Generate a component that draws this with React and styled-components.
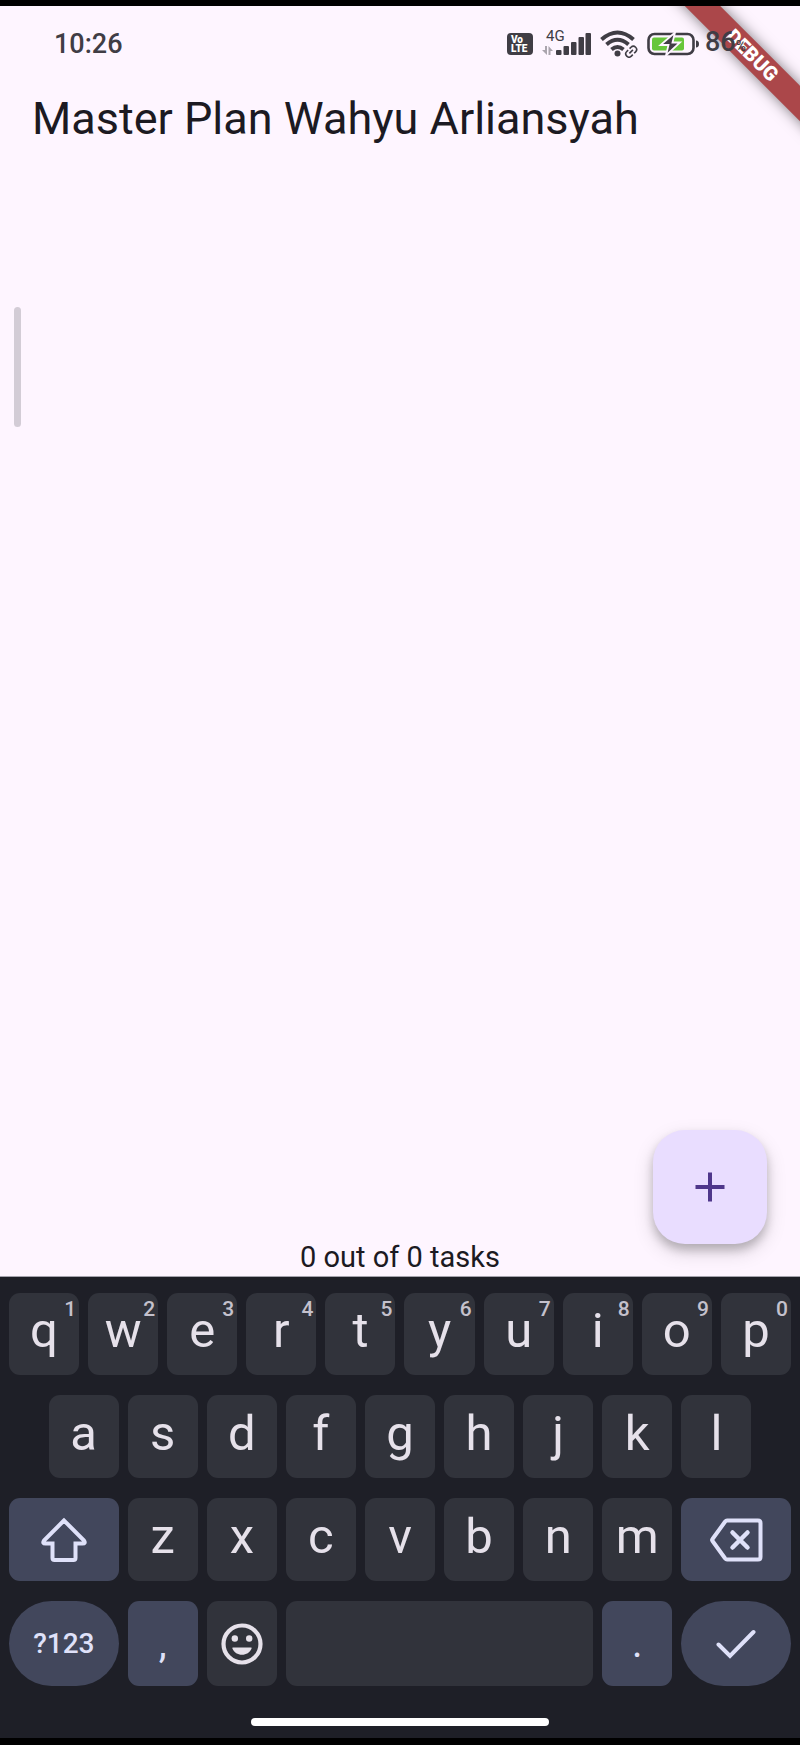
import React from "react";
import styled, { createGlobalStyle, css } from "styled-components";

const color = {
  surface: "#fef5ff",
  ink: "#1c1a22",
  status: "#403d45",
  board: "#1e1f27",
  key: "#31333b",
  action: "#42475c",
  glyph: "#e6e1ea",
  actionGlyph: "#dfe1f9",
};

const GlobalStyle = createGlobalStyle`
  *, *::before, *::after { box-sizing: border-box; }
  body {
    margin: 0;
    background: #000;
    font-family: Roboto, "Liberation Sans", sans-serif;
  }
  button { font: inherit; border: 0; padding: 0; cursor: pointer; }
  svg { display: block; }
`;

const Screen = styled.div`
  display: flex;
  flex-direction: column;
  min-height: 100vh;
  padding: 6px 0 7px;
`;

const AppArea = styled.div`
  position: relative;
  flex: 1;
  display: flex;
  flex-direction: column;
  overflow: hidden;
  background: ${color.surface};
  color: ${color.ink};
`;

const StatusBar = styled.header`
  position: relative;
  z-index: 2;
  display: flex;
  align-items: center;
  justify-content: space-between;
  height: 76px;
  padding: 0 54px;
  color: ${color.status};
  font-size: 27px;
  line-height: 32px;
  font-weight: 500;
`;

const StatusIcons = styled.div`
  display: flex;
  align-items: center;
  gap: 9px;
`;

const VolteBadge = styled.span`
  display: flex;
  flex-direction: column;
  justify-content: center;
  width: 26px;
  height: 22px;
  padding-left: 4px;
  border-radius: 4px;
  background: ${color.status};
  color: #fff;
  font-size: 10px;
  line-height: 9px;
  font-weight: 900;
`;

const Signal = styled.span`
  position: relative;
  display: block;
`;

const NetworkType = styled.span`
  position: absolute;
  top: -4px;
  left: 4px;
  font-size: 15px;
  line-height: 16px;
  font-weight: 400;
`;

const Battery = styled.span`
  display: flex;
  align-items: center;
  gap: 6px;
`;

const BatteryText = styled.span`
  display: flex;
  align-items: baseline;
`;

const Percent = styled.small`
  font-size: 14px;
`;

const Ribbon = styled.div`
  position: absolute;
  z-index: 1;
  top: 37px;
  right: -52px;
  width: 200px;
  height: 25px;
  background: #ab474a;
  box-shadow: 0 0 14px rgba(0, 0, 0, 0.5);
  color: #fff;
  font-size: 20px;
  line-height: 25px;
  font-weight: 900;
  text-align: center;
  transform: rotate(45deg);
`;

const Title = styled.h1`
  margin: 0;
  padding: 10px 32px;
  font-size: 45px;
  line-height: 54px;
  font-weight: 400;
`;

const EdgeHandle = styled.div`
  position: absolute;
  top: 301px;
  left: 14px;
  width: 7px;
  height: 120px;
  border-radius: 4px;
  background: #d3ccd6;
`;

const PlanList = styled.main`
  flex: 1;
`;

const Footer = styled.footer`
  padding-bottom: 3px;
  font-size: 29px;
  line-height: 32px;
  text-align: center;
`;

const AddButton = styled.button`
  position: absolute;
  right: 33px;
  bottom: 32px;
  display: grid;
  place-items: center;
  width: 114px;
  height: 114px;
  border-radius: 32px;
  background: #e9ddff;
  box-shadow: 0 6px 10px rgba(0, 0, 0, 0.2), 0 8px 20px rgba(0, 0, 0, 0.15);
`;

const Keyboard = styled.section`
  display: flex;
  flex-direction: column;
  gap: 20px;
  padding: 16px 9px 12px;
  border-top: 1px solid #a5a3ad;
  background: ${color.board};
`;

const KeyRow = styled.div`
  display: grid;
  grid-template-columns: repeat(20, minmax(0, 1fr));
  grid-auto-rows: ${(p) => p.$height}px;
  column-gap: 9px;
`;

const Key = styled.button`
  position: relative;
  display: flex;
  align-items: center;
  justify-content: center;
  grid-column: ${(p) => (p.$start ? `${p.$start} / ` : "")}span ${(p) => p.$span || 2};
  border-radius: 11px;
  background: ${color.key};
  color: ${color.glyph};
  font-size: 49px;
  line-height: 60px;

  ${(p) => p.$letter && css`
    padding-bottom: 6px;
  `}
  ${(p) => p.$action && css`
    background: ${color.action};
    color: ${color.actionGlyph};
    font-size: 40px;
  `}
  ${(p) => p.$round && css`
    border-radius: 43px;
    font-size: 28px;
    font-weight: 500;
  `}
`;

const Hint = styled.span`
  position: absolute;
  top: 4px;
  right: 3px;
  color: #c4c1cc;
  font-size: 21px;
  line-height: 24px;
  font-weight: 500;
`;

const HomeBar = styled.div`
  align-self: center;
  width: 38%;
  height: 8px;
  margin-top: 12px;
  border-radius: 4px;
  background: #fff;
`;

const SignalIcon = () => (
  <svg width="49" height="24" viewBox="0 0 49 24" fill="currentColor" aria-hidden="true">
    <g fill="#aaa4ad">
      <path d="M3 14h2v9L0 18h3z" />
      <path d="M6.500 14l4.500 5H8.500v4h-2z" />
    </g>
    <rect x="14" y="18" width="5.500" height="5" rx="1" />
    <rect x="21.500" y="14" width="5.500" height="9" rx="1" />
    <rect x="29" y="10" width="5.500" height="13" rx="1" />
    <rect x="36.500" y="5" width="5.500" height="18" rx="1" />
    <rect x="43.500" y="1" width="5.500" height="22" rx="1" />
  </svg>
);

const WifiIcon = () => (
  <svg width="38" height="28" viewBox="0 0 38 28" fill="none" stroke="currentColor" aria-hidden="true">
    <path d="M1.500 9.500Q17.500-4.500 33.500 9.500" strokeWidth="4" />
    <path d="M6.500 14.500Q17.500 5 28.500 14.500" strokeWidth="4" />
    <path d="M11.500 19.500Q17.500 14.500 23.500 19.500" strokeWidth="4" />
    <circle cx="17.500" cy="23.500" r="3" fill="currentColor" stroke="none" />
    <g transform="rotate(-45 31 21.500)">
      <rect x="24" y="17.500" width="14" height="8" rx="4" fill={color.surface} stroke={color.surface} strokeWidth="2" />
      <path d="M30 25h-2a3.200 3.200 0 0 1 0-6.500h2M32 18.500h2a3.200 3.200 0 0 1 0 6.500h-2M28.500 21.700h5" strokeWidth="1.600" />
    </g>
  </svg>
);

const BatteryIcon = () => (
  <svg width="52" height="24" viewBox="0 0 52 24" aria-hidden="true">
    <rect x="1.500" y="2" width="45" height="20" rx="6" fill="none" stroke="currentColor" strokeWidth="2.600" />
    <rect x="5" y="5.500" width="32" height="13" rx="2" fill="#67c63a" />
    <path d="M49 8.500c2 .3 3 1.300 3 3.500s-1 3.200-3 3.500z" fill="currentColor" />
    <path d="M28 .500L13.500 13H21.500L19 23.500 33 10.500H25.500z" fill="currentColor" stroke={color.surface} strokeWidth="1.800" />
  </svg>
);

const PlusIcon = () => (
  <svg width="30" height="30" viewBox="0 0 30 30" stroke="#4f378b" strokeWidth="4" aria-hidden="true">
    <path d="M15 .500v29M.500 15h29" />
  </svg>
);

const ShiftIcon = () => (
  <svg width="48" height="46" viewBox="0 0 48 46" fill="none" stroke="currentColor" strokeWidth="4" aria-hidden="true">
    <path d="M24 3.500L4 23.500q-2 3 1.500 3H12.500V41q0 2 2 2h19q2 0 2-2V26.500h7q3.500 0 1.500-3z" />
  </svg>
);

const BackspaceIcon = () => (
  <svg width="54" height="44" viewBox="0 0 54 44" fill="none" stroke="currentColor" strokeWidth="4" strokeLinecap="round" strokeLinejoin="round" aria-hidden="true">
    <path d="M18 2.500H49q2.500 0 2.500 2.500V39q0 2.500-2.500 2.500H18q-1 0-2-1.300L3.500 23q-.8-1 0-2L16 3.800q1-1.300 2-1.300z" />
    <path d="M23.500 14.500l15 15M38.500 14.500l-15 15" strokeWidth="4.500" />
  </svg>
);

const SmileIcon = () => (
  <svg width="42" height="42" viewBox="0 0 42 42" aria-hidden="true">
    <circle cx="21" cy="21" r="18.500" fill="none" stroke="currentColor" strokeWidth="4.200" />
    <circle cx="13.800" cy="15.500" r="3.200" fill="currentColor" />
    <circle cx="28.200" cy="15.500" r="3.200" fill="currentColor" />
    <path d="M12.200 24.500h17.600c.8 0 1 .6.700 1.200-1.600 3.800-5.200 6-9.500 6s-7.900-2.200-9.500-6c-.3-.6-.1-1.200.7-1.200z" fill="currentColor" />
  </svg>
);

const CheckIcon = () => (
  <svg width="40" height="30" viewBox="0 0 40 30" fill="none" stroke="currentColor" strokeWidth="4" strokeLinecap="round" aria-hidden="true">
    <path d="M2.500 15.500L14 27 37.500 3" />
  </svg>
);

const topRow = [..."qwertyuiop"];
const hints = [..."1234567890"];
const middleRow = [..."asdfghjkl"];
const bottomRow = [..."zxcvbnm"];

export default function App() {
  return (
    <Screen>
      <GlobalStyle />
      <AppArea>
        <StatusBar>
          <time>10:26</time>
          <StatusIcons>
            <VolteBadge>
              <span>Vo</span>
              <span>LTE</span>
            </VolteBadge>
            <Signal>
              <NetworkType>4G</NetworkType>
              <SignalIcon />
            </Signal>
            <WifiIcon />
            <Battery>
              <BatteryIcon />
              <BatteryText>
                86<Percent>%</Percent>
              </BatteryText>
            </Battery>
          </StatusIcons>
        </StatusBar>
        <Ribbon>DEBUG</Ribbon>
        <Title>Master Plan Wahyu Arliansyah</Title>
        <EdgeHandle />
        <PlanList />
        <Footer>0 out of 0 tasks</Footer>
        <AddButton type="button" aria-label="Add task">
          <PlusIcon />
        </AddButton>
      </AppArea>
      <Keyboard aria-label="Keyboard">
        <KeyRow $height={82}>
          {topRow.map((letter, i) => (
            <Key key={letter} type="button" $letter>
              {letter}
              <Hint>{hints[i]}</Hint>
            </Key>
          ))}
        </KeyRow>
        <KeyRow $height={83}>
          {middleRow.map((letter, i) => (
            <Key key={letter} type="button" $letter $start={i === 0 ? 2 : undefined}>
              {letter}
            </Key>
          ))}
        </KeyRow>
        <KeyRow $height={83}>
          <Key type="button" aria-label="Shift" $action $span={3}>
            <ShiftIcon />
          </Key>
          {bottomRow.map((letter) => (
            <Key key={letter} type="button" $letter>
              {letter}
            </Key>
          ))}
          <Key type="button" aria-label="Backspace" $action $span={3}>
            <BackspaceIcon />
          </Key>
        </KeyRow>
        <KeyRow $height={85}>
          <Key type="button" $action $round $span={3}>?123</Key>
          <Key type="button" $action>,</Key>
          <Key type="button" aria-label="Emoji">
            <SmileIcon />
          </Key>
          <Key type="button" aria-label="Space" $span={8} />
          <Key type="button" $action>.</Key>
          <Key type="button" aria-label="Done" $action $round $span={3}>
            <CheckIcon />
          </Key>
        </KeyRow>
        <HomeBar />
      </Keyboard>
    </Screen>
  );
}
